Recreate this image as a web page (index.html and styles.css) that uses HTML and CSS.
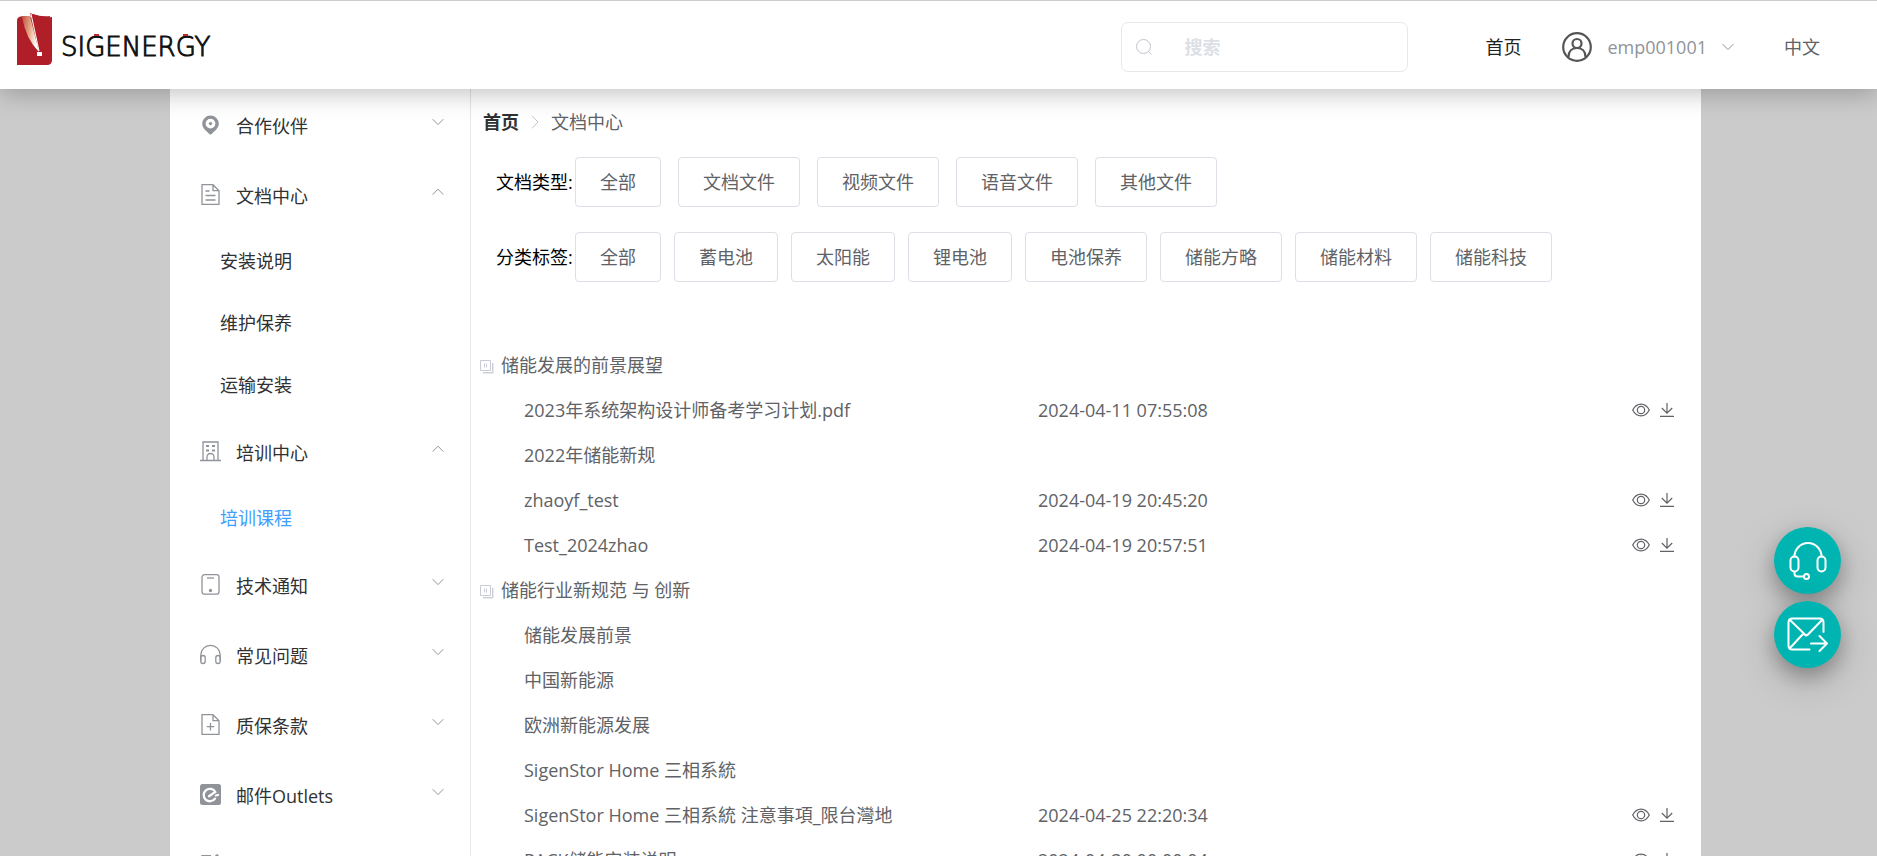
FILE: index.html
```html
<!DOCTYPE html>
<html lang="zh-CN">
<head>
<meta charset="utf-8">
<title>文档中心</title>
<link rel="stylesheet" href="styles.css">
</head>
<body>
<svg class="sprite" aria-hidden="true">
  <symbol id="down" viewBox="0 0 12 12"><path d="M.7 3.2 6 8.600l5.300-5.400" fill="none" stroke="currentColor"/></symbol>
  <symbol id="up" viewBox="0 0 12 12"><path d="M.7 8.600 6 3.200l5.300 5.400" fill="none" stroke="currentColor"/></symbol>
  <symbol id="copy" viewBox="0 0 14 14"><g fill="none" stroke="currentColor"><path d="M.5.5h10v10H.5zM12.500 3v9.500H3M4.500 3.500v4M6.500 3.500v4"/><path d="M13.500 3v10.500H3" opacity=".4"/></g></symbol>
  <symbol id="eye" viewBox="0 0 18 14"><g fill="none" stroke="currentColor" stroke-width="1.200"><path d="M.7 7C4.800-.8 13.200-.8 17.300 7c-4.100 7.800-12.500 7.800-16.600 0z"/><circle cx="9" cy="7" r="3.700"/></g></symbol>
  <symbol id="download" viewBox="0 0 14 14"><path d="M7 0v10M1.800 5 7 10.200 12.200 5M0 13.400h14" fill="none" stroke="currentColor" stroke-width="1.200"/></symbol>
</svg>

<header class="header">
  <a class="logo" href="#" aria-label="SIGENERGY">
    <svg width="204" height="56" viewBox="0 0 204 56">
      <defs><linearGradient id="beam" x1="0" y1="0" x2="1" y2="0.300"><stop offset="0" stop-color="#b5362a"/><stop offset=".65" stop-color="#e8b492"/><stop offset="1" stop-color="#fff"/></linearGradient></defs>
      <path d="M4 4h11L17 1q9 4 19 3v43q0 5-5 5H1V8q0-4 3-4z" fill="#b01f27"/>
      <path d="M14 0 23 39 34 3Q23 4 14 0z" fill="#b01f27"/>
      <path d="M3 3h11l9 36Q10 26 6 4z" fill="url(#beam)"/>
      <path d="M15 1 23 38" stroke="#fff" stroke-width="1"/>
      <rect x="21" y="39" width="5" height="4" fill="#fff"/>
      <text class="logo-text" x="45" y="43">SIGENERGY</text>
      <path d="M78 22h5M167 22h5" stroke="#c02a35" stroke-width="2"/>
    </svg>
  </a>
  <label class="search">
    <svg width="16" height="16" viewBox="0 0 16 16" aria-hidden="true"><g fill="none" stroke="currentColor"><circle cx="7.500" cy="7.500" r="7"/><path d="m12.500 12.500 3 3"/></g></svg>
    <input type="search" placeholder="搜索" aria-label="搜索">
  </label>
  <a class="home" href="#">首页</a>
  <button class="user" type="button">
    <svg class="avatar" viewBox="0 0 30 30"><g fill="none" stroke="#555" stroke-width="2.200"><circle cx="15" cy="15" r="13.800"/><circle cx="15" cy="11.500" r="4.500"/><path d="M6.500 25c0-5.800 3.500-9 8.500-9s8.500 3.200 8.500 9"/></g></svg>
    <span>emp001001</span>
    <svg class="chevron"><use href="#down"/></svg>
  </button>
  <button class="lang" type="button">中文</button>
</header>

<div class="page">
  <nav class="sidebar">
    <button class="group" type="button"><svg class="icon" viewBox="0 0 21 21"><path fill="currentColor" fill-rule="evenodd" d="M10.500 1.500a8.300 8.300 0 0 1 8.300 8.300c0 4-3.800 7.500-8.300 11-4.500-3.500-8.300-7-8.300-11a8.300 8.300 0 0 1 8.300-8.300zm0 3.200a4.900 4.900 0 1 0 0 9.800 4.900 4.900 0 0 0 0-9.800z"/><circle cx="10.500" cy="9.600" r="1.700" fill="currentColor"/></svg><span>合作伙伴</span><svg class="chevron"><use href="#down"/></svg></button>
    <button class="group" type="button"><svg class="icon line" viewBox="0 0 21 21"><path d="M2 .7h11l6 6v13.600H2zM13 .7v6h6M5.500 7h4M5.500 11.500h10M5.500 16h10"/></svg><span>文档中心</span><svg class="chevron"><use href="#up"/></svg></button>
    <div class="sub"><a href="#">安装说明</a><a href="#">维护保养</a><a href="#">运输安装</a></div>
    <button class="group" type="button"><svg class="icon line" viewBox="0 0 21 21"><path d="M3 19.500V1h15v18.500M0 19.500h21M7 19.500V16a3.500 3.500 0 0 1 7 0v3.500"/><path d="M6 5h3M12 5h3M6 9.500h3M12 9.500h3" stroke-width="2"/></svg><span>培训中心</span><svg class="chevron"><use href="#up"/></svg></button>
    <div class="sub"><a class="active" href="#">培训课程</a></div>
    <button class="group" type="button"><svg class="icon line" viewBox="0 0 21 21"><rect x="2" y=".7" width="17" height="19.500" rx="2.500"/><path d="M7 4h7"/><circle cx="10.500" cy="16.500" r="1" fill="currentColor"/></svg><span>技术通知</span><svg class="chevron"><use href="#down"/></svg></button>
    <button class="group" type="button"><svg class="icon line" viewBox="0 0 21 21"><path d="M.8 17V11a9.700 9.700 0 0 1 19.400 0v6"/><rect x=".8" y="11.500" width="4.400" height="8" rx="2.200"/><rect x="15.800" y="11.500" width="4.400" height="8" rx="2.200"/></svg><span>常见问题</span><svg class="chevron"><use href="#down"/></svg></button>
    <button class="group" type="button"><svg class="icon line" viewBox="0 0 21 21"><path d="M2 .7h11l6 6v13.600H2zM13 .7v6h6M10.500 9v7.500M6.700 12.700h7.600"/></svg><span>质保条款</span><svg class="chevron"><use href="#down"/></svg></button>
    <button class="group" type="button"><svg class="icon" viewBox="0 0 21 21"><rect y="0" width="21" height="21" rx="2.500" fill="currentColor"/><path d="M9 12.200 15.300 8A6.200 6.200 0 1 0 15 14.600M16 11.500l2-.5" fill="none" stroke="#fff" stroke-width="2.300" stroke-linecap="round"/></svg><span>邮件Outlets</span><svg class="chevron"><use href="#down"/></svg></button>
    <button class="group" type="button" aria-label="更多"><svg class="icon line" viewBox="0 0 21 21"><path d="M11 1.700H2v18h17V10M8 13l1-4L17 .7l2.300 2.300L11 12z"/></svg></button>
  </nav>

  <main class="main">
    <nav class="crumbs"><a href="#">首页</a><svg width="8" height="14" viewBox="0 0 8 14"><path d="m1 .7 6 6.300-6 6.300" fill="none" stroke="#c0c4cc"/></svg><span>文档中心</span></nav>
    <div class="filter types"><span class="label">文档类型:</span><button type="button">全部</button><button type="button">文档文件</button><button type="button">视频文件</button><button type="button">语音文件</button><button type="button">其他文件</button></div>
    <div class="filter tags"><span class="label">分类标签:</span><button type="button">全部</button><button type="button">蓄电池</button><button type="button">太阳能</button><button type="button">锂电池</button><button type="button">电池保养</button><button type="button">储能方略</button><button type="button">储能材料</button><button type="button">储能科技</button></div>

    <table class="docs">
      <colgroup><col class="col-name"><col><col class="col-actions"></colgroup>
      <tbody>
        <tr><th colspan="3"><svg class="copy"><use href="#copy"/></svg>储能发展的前景展望</th></tr>
        <tr><td>2023年系统架构设计师备考学习计划.pdf</td><td>2024-04-11 07:55:08</td><td><div class="actions"><button type="button" aria-label="查看"><svg class="eye"><use href="#eye"/></svg></button><button type="button" aria-label="下载"><svg class="dl"><use href="#download"/></svg></button></div></td></tr>
        <tr><td>2022年储能新规</td><td></td><td></td></tr>
        <tr><td>zhaoyf_test</td><td>2024-04-19 20:45:20</td><td><div class="actions"><button type="button" aria-label="查看"><svg class="eye"><use href="#eye"/></svg></button><button type="button" aria-label="下载"><svg class="dl"><use href="#download"/></svg></button></div></td></tr>
        <tr><td>Test_2024zhao</td><td>2024-04-19 20:57:51</td><td><div class="actions"><button type="button" aria-label="查看"><svg class="eye"><use href="#eye"/></svg></button><button type="button" aria-label="下载"><svg class="dl"><use href="#download"/></svg></button></div></td></tr>
        <tr><th colspan="3"><svg class="copy"><use href="#copy"/></svg>储能行业新规范 与 创新</th></tr>
        <tr><td>储能发展前景</td><td></td><td></td></tr>
        <tr><td>中国新能源</td><td></td><td></td></tr>
        <tr><td>欧洲新能源发展</td><td></td><td></td></tr>
        <tr><td>SigenStor Home 三相系統</td><td></td><td></td></tr>
        <tr><td>SigenStor Home 三相系統 注意事項_限台灣地</td><td>2024-04-25 22:20:34</td><td><div class="actions"><button type="button" aria-label="查看"><svg class="eye"><use href="#eye"/></svg></button><button type="button" aria-label="下载"><svg class="dl"><use href="#download"/></svg></button></div></td></tr>
        <tr><td>PACK储能安装说明</td><td>2024-04-30 00:00:04</td><td><div class="actions"><button type="button" aria-label="查看"><svg class="eye"><use href="#eye"/></svg></button><button type="button" aria-label="下载"><svg class="dl"><use href="#download"/></svg></button></div></td></tr>
      </tbody>
    </table>
  </main>
</div>

<div class="floats">
  <button type="button" aria-label="客服"><svg width="38" height="40" viewBox="0 0 38 40"><path d="M5.500 15.500a13.500 13.500 0 0 1 27 0M5.500 31v1.500q0 3 3 3H15"/><rect x="1.500" y="15.500" width="8" height="15" rx="4"/><rect x="28.500" y="15.500" width="8" height="15" rx="4"/><circle cx="17.500" cy="35.500" r="2.500"/></svg></button>
  <button type="button" aria-label="邮件"><svg width="42" height="36" viewBox="0 0 42 36"><path d="M22.500 32.500H5.500q-4 0-4-4v-23q0-4 4-4h27q4 0 4 4V15M3 3l16 15.500 2-1M35 3 21 17.500q-1.500 2-3.500 0M3 31 15.500 17.500M24 26.500h16M32.500 19l7.500 7.500-7.500 7.500"/></svg></button>
</div>
</body>
</html>
```
FILE: styles.css
```css
* { box-sizing: border-box; }

body {
  margin: 0;
  height: 100vh;
  overflow: hidden;
  background: #cbcbcb;
  color: #606266;
  font: 18px/24px "Open Sans", "Noto Sans CJK SC", sans-serif;
}

a { color: inherit; text-decoration: none; }

button {
  padding: 0;
  border: 0;
  background: none;
  color: inherit;
  font: inherit;
  cursor: pointer;
}

svg { display: block; flex: none; }
.sprite { position: absolute; width: 0; height: 0; }
.chevron { width: 12px; height: 12px; color: #909399; }

.header {
  position: relative;
  z-index: 2;
  display: flex;
  align-items: center;
  height: 89px;
  padding: 4px 57px 0 16px;
  border-top: 1px solid #ccc;
  background: #fff;
  box-shadow: 0 4px 24px rgba(0, 0, 0, .25);
}

.logo { margin: 0 auto 12px 0; }
.logo-text { font-family: "DejaVu Sans", sans-serif; font-weight: 200; font-size: 26px; fill: #111; stroke: #111; stroke-width: 1px; }

.search {
  display: flex;
  align-items: center;
  gap: 32px;
  width: 287px;
  height: 50px;
  margin-right: 77px;
  padding: 0 14px;
  border: 1px solid #e6e8ec;
  border-radius: 7px;
  color: #c0c4cc;
}
.search input {
  flex: 1;
  min-width: 0;
  padding: 0;
  border: 0;
  outline: 0;
  background: none;
  color: #303133;
  font: inherit;
  font-weight: 700;
}
.search input::placeholder { color: #dcdfe6; opacity: 1; }

.home { margin-right: 41px; color: #222; }
.user { display: flex; align-items: center; gap: 15px; margin-right: 50px; color: #909399; }
.avatar { width: 30px; height: 30px; }

.page { display: flex; margin: 0 176px 0 170px; background: #fff; }

.sidebar { flex: none; width: 301px; padding-top: 2px; border-right: 1px solid #e6e6e6; color: #303133; }
.group { display: flex; align-items: center; width: 100%; height: 70px; padding: 0 26px 0 30px; text-align: left; }
.group .icon { width: 21px; height: 21px; margin: 0 15px 4px 0; color: #909399; }
.group .chevron { margin: 0 0 8px auto; }
.line { fill: none; stroke: currentColor; stroke-width: 1.3; }
.sub { padding: 0 0 1px 50px; }
.sub a { display: block; height: 62px; line-height: 60px; }
.sub .active { color: #409eff; }

.main { flex: 1; min-width: 0; padding-top: 21px; }
.crumbs { display: flex; align-items: center; gap: 12px; padding-left: 12px; }
.crumbs a { color: #303133; font-weight: 700; }

.filter { display: flex; align-items: center; padding-left: 25px; }
.types { gap: 17px; margin-top: 23px; }
.tags { gap: 13px; margin-top: 25px; }
.label { width: 79px; color: #000; white-space: nowrap; }
.types .label { margin-right: -17px; }
.tags .label { margin-right: -13px; }
.filter button { height: 50px; padding: 0 24px; border: 1px solid #dcdfe6; border-radius: 4px; }

.docs { width: 100%; margin-top: 60px; border-collapse: collapse; table-layout: fixed; }
.docs tr { height: 45px; }
.docs th, .docs td { padding: 0; text-align: left; font-weight: 400; white-space: nowrap; }
.docs td:first-child { padding-left: 53px; }
.col-name { width: 567px; }
.col-actions { width: 100px; }
.copy { display: inline-block; width: 14px; height: 14px; margin: 0 7px 0 9px; color: #c9ccd6; vertical-align: -2px; }
.actions { display: flex; justify-content: flex-end; align-items: center; gap: 10px; padding-right: 27px; }
.eye { width: 18px; height: 14px; }
.dl { width: 14px; height: 14px; }

.floats { position: fixed; right: 36px; bottom: 188px; z-index: 3; display: grid; gap: 7px; }
.floats button {
  display: grid;
  place-items: center;
  width: 67px;
  height: 67px;
  border-radius: 50%;
  background: #00b5b1;
  box-shadow: 0 12px 40px rgba(0, 0, 0, .2), 0 8px 20px rgba(0, 0, 0, .25);
}
.floats svg { fill: none; stroke: #fff; stroke-width: 2; stroke-linecap: round; stroke-linejoin: round; }
```
